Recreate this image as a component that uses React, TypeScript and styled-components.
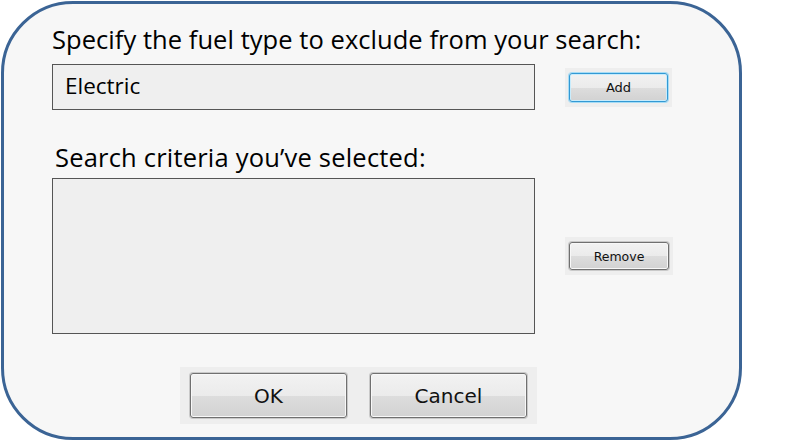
import React from "react";
import styled, { createGlobalStyle } from "styled-components";

const Global = createGlobalStyle`
  html, body { margin: 0; padding: 0; background: #ffffff; }
  body { width: 799px; height: 441px; overflow: hidden; }
`;

const Page = styled.div`
  width: 799px;
  height: 441px;
  padding: 1px 0 0 1px;
  box-sizing: border-box;
`;

const Frame = styled.div`
  box-sizing: border-box;
  width: 741px;
  height: 439px;
  border: 3px solid #3b6495;
  border-radius: 72px;
  background: #f7f7f7;
  padding: 20px 0 0 48px;
  display: flex;
  flex-direction: column;
  font-family: "Open Sans", "Noto Sans", sans-serif;
  color: #000;
`;

const Heading = styled.div<{ $indent?: number; $top?: number; $spacing?: number }>`
  font-size: 25.5px;
  line-height: 30px;
  height: 30px;
  letter-spacing: ${(p) => p.$spacing ?? 0}px;
  margin-top: ${(p) => p.$top ?? 0}px;
  padding-left: ${(p) => p.$indent ?? 0}px;
  white-space: nowrap;
`;

const Row = styled.div<{ $top: number }>`
  display: flex;
  align-items: center;
  margin-top: ${(p) => p.$top}px;
`;

const Field = styled.div<{ $height: number }>`
  box-sizing: border-box;
  width: 483px;
  height: ${(p) => p.$height}px;
  border: 1px solid #555555;
  background: #efefef;
  font-size: 22.5px;
  padding: 8px 0 0 12px;
  line-height: 26px;
  flex: none;
`;

const ButtonPad = styled.div<{ $left: number; $padX: number; $padY: number }>`
  margin-left: ${(p) => p.$left}px;
  padding: ${(p) => p.$padY}px ${(p) => p.$padX}px;
  background: #eeeeee;
  display: flex;
  gap: 23px;
`;

const Button = styled.button<{ $w: number; $h: number; $fs: number; $focus?: boolean }>`
  box-sizing: border-box;
  width: ${(p) => p.$w}px;
  height: ${(p) => p.$h}px;
  padding: 0;
  border-radius: 3px;
  border: 1px solid ${(p) => (p.$focus ? "#3399d4" : "#707070")};
  box-shadow: ${(p) =>
    p.$focus
      ? "0 0 0 1px #a6dcf5, inset 0 0 0 1px #c8ecfc"
      : "0 0 0 1px #c9c9c9, inset 0 0 0 1px #f8f8f8"};
  background: linear-gradient(#f2f2f2 0%, #ebebeb 50%, #dddddd 51%, #d2d2d2 100%);
  font-family: "DejaVu Sans", Tahoma, sans-serif;
  font-size: ${(p) => p.$fs}px;
  color: #111111;
  display: flex;
  align-items: center;
  justify-content: center;
`;

const Footer = styled.div`
  display: flex;
  margin-top: 33px;
  padding-left: 128px;
`;

export default function App() {
  return (
    <Page>
      <Global />
      <Frame>
        <Heading $spacing={0.05}>Specify the fuel type to exclude from your search:</Heading>
        <Row $top={10}>
          <Field $height={46}>Electric</Field>
          <ButtonPad $left={30} $padX={4} $padY={5}>
            <Button $w={99} $h={29} $fs={13} $focus>
              Add
            </Button>
          </ButtonPad>
        </Row>
        <Heading $indent={3} $top={32} $spacing={0.2}>
          Search criteria you’ve selected:
        </Heading>
        <Row $top={6}>
          <Field $height={156} />
          <ButtonPad $left={30} $padX={4} $padY={5}>
            <Button $w={100} $h={28} $fs={12.5}>
              Remove
            </Button>
          </ButtonPad>
        </Row>
        <Footer>
          <ButtonPad $left={0} $padX={10} $padY={6}>
            <Button $w={157} $h={45} $fs={20}>
              OK
            </Button>
            <Button $w={157} $h={45} $fs={20}>
              Cancel
            </Button>
          </ButtonPad>
        </Footer>
      </Frame>
    </Page>
  );
}
